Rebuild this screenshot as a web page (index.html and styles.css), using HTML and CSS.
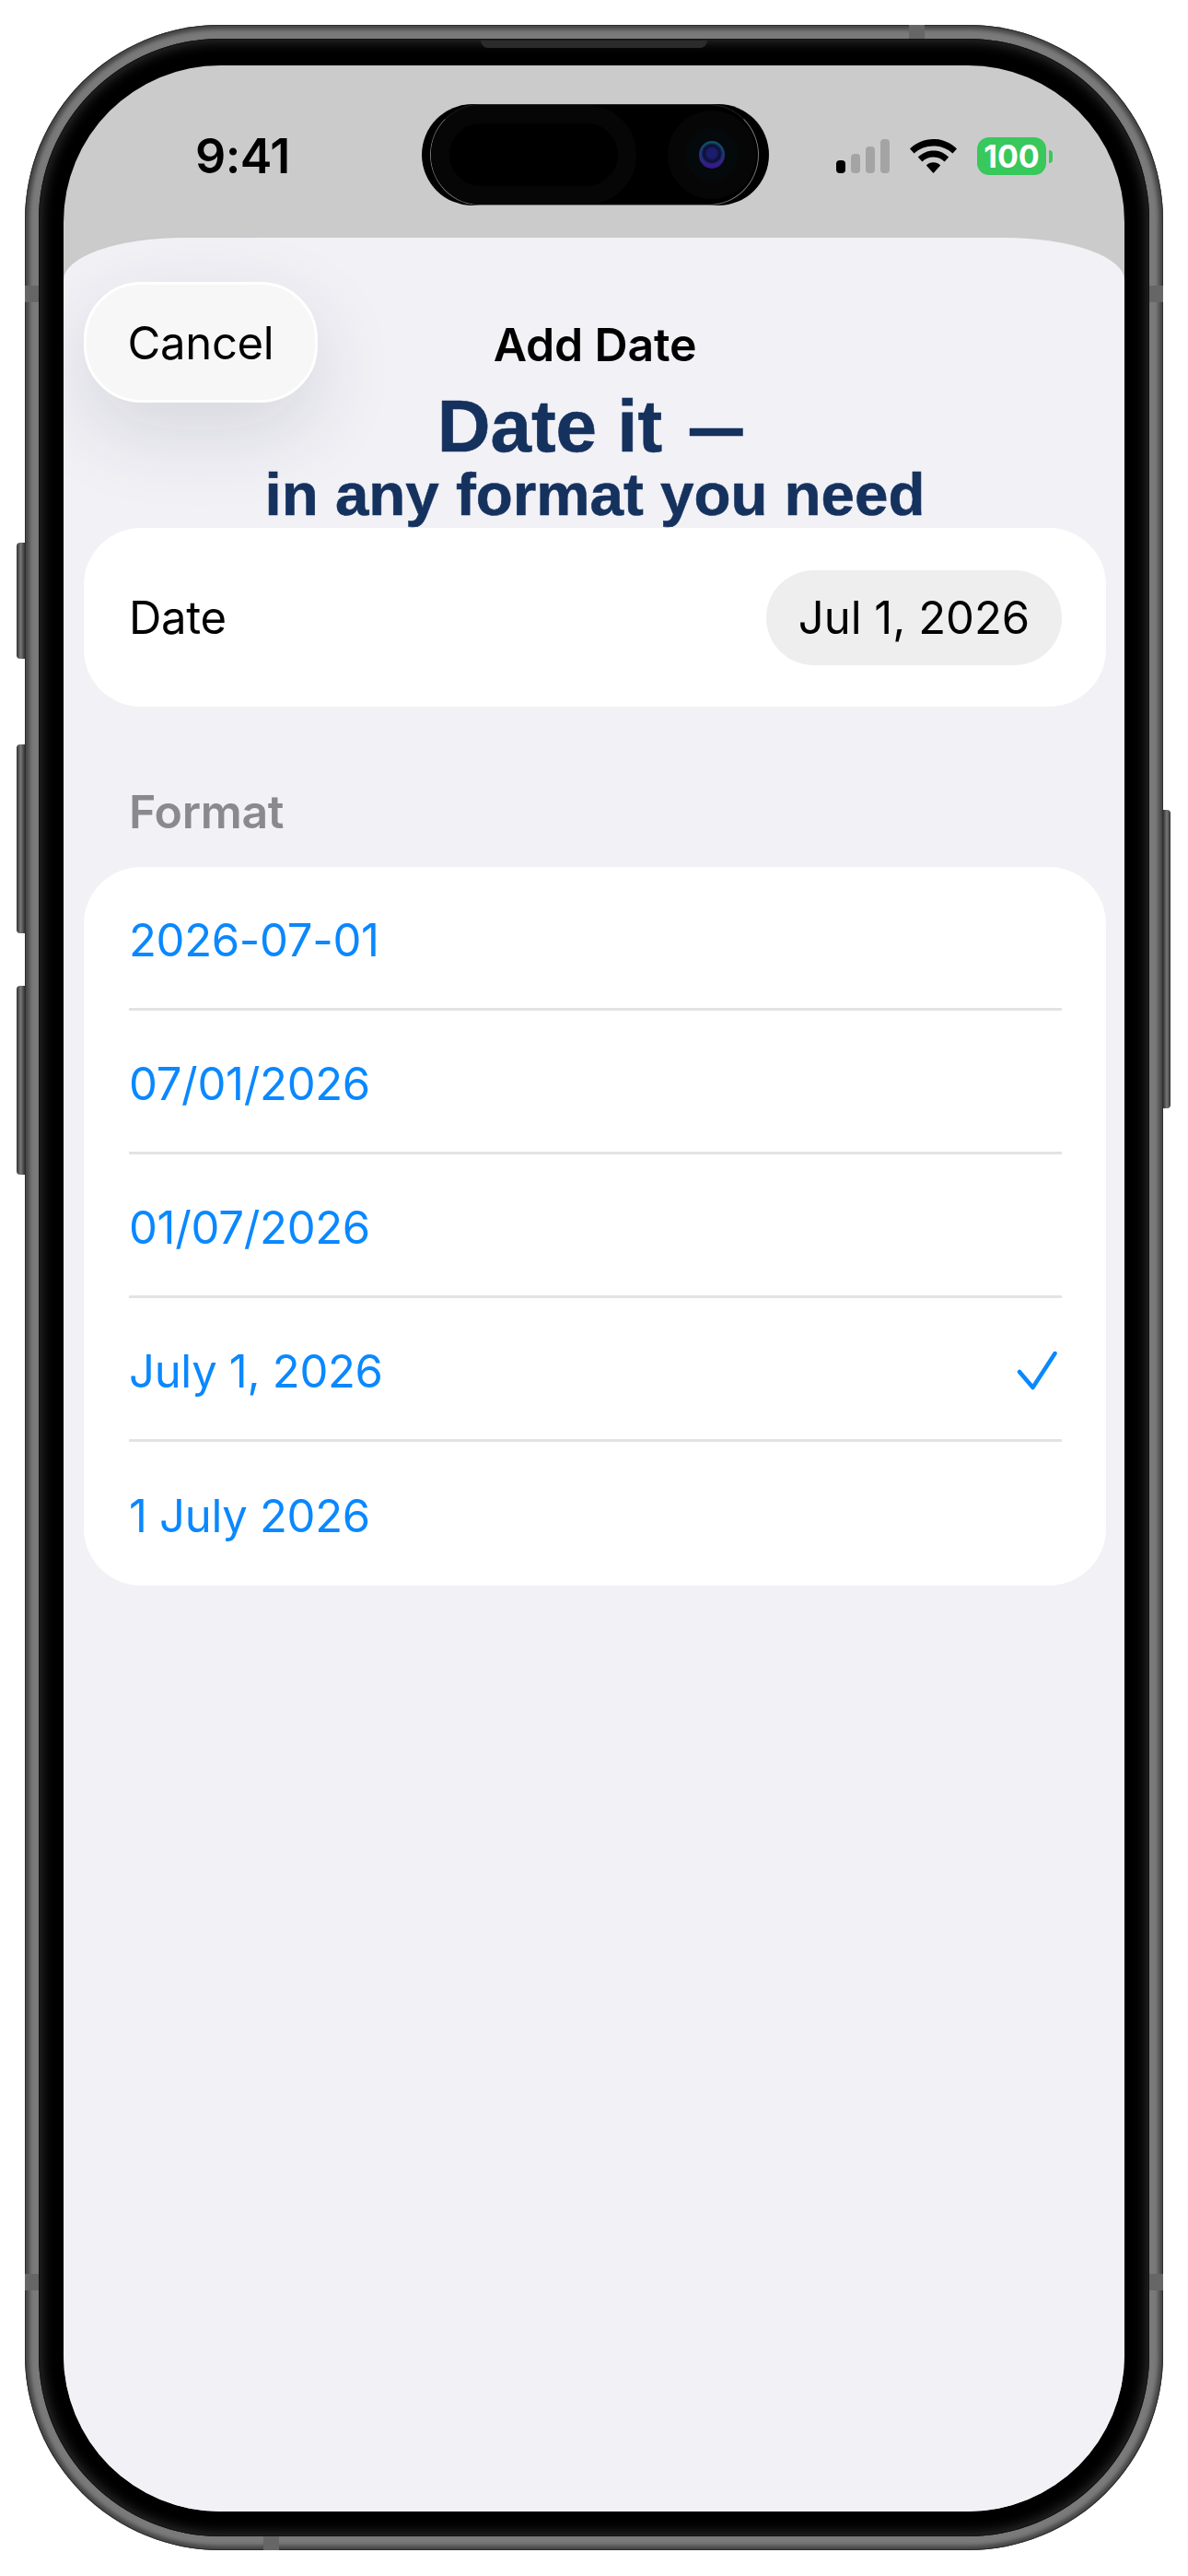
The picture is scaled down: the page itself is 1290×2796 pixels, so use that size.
FILE: index.html
```html
<!DOCTYPE html>
<html lang="en">
<head>
  <meta charset="UTF-8">
  <meta name="viewport" content="width=device-width, initial-scale=1.0">
  <title>Add Date</title>
  <link rel="stylesheet" href="styles.css">
</head>
<body>

<div class="device">
  <span class="side-btn mute"></span>
  <span class="side-btn vol-up"></span>
  <span class="side-btn vol-down"></span>
  <span class="side-btn power"></span>
  <span class="band band-top"></span>
  <span class="band band-bottom"></span>
  <span class="band band-left-top"></span>
  <span class="band band-right-top"></span>
  <span class="band band-left-bottom"></span>
  <span class="band band-right-bottom"></span>

  <div class="bezel">
    <span class="speaker"></span>
    <div class="screen">

      <div class="status-bar">
        <div class="time">9:41</div>
        <div class="island">
          <span class="island-line"></span>
          <span class="island-left"></span>
          <span class="camera"><span class="lens"></span></span>
        </div>
        <div class="status-icons">
          <div class="signal">
            <span class="bar bar-1 on"></span>
            <span class="bar bar-2"></span>
            <span class="bar bar-3"></span>
            <span class="bar bar-4"></span>
          </div>
          <svg class="wifi" width="51" height="37" viewBox="0 0 51 37">
            <path d="M0 10.5C7 3.8 16 0 25.5 0S44 3.8 51 10.5L46.400 15.400C40.600 10.300 33.400 7.400 25.500 7.400S10.400 10.300 4.600 15.400Z"/>
            <path d="M8.800 19.600C13.300 15.100 19.200 12.400 25.500 12.400S37.700 15.100 42.200 19.600L37.600 24.400C34.300 21.300 30.100 19.500 25.500 19.500S16.700 21.300 13.400 24.400Z"/>
            <path d="M17.800 28.400C19.900 26.400 22.600 25.200 25.500 25.200S31.100 26.400 33.200 28.400L25.500 37Z"/>
          </svg>
          <div class="battery">
            <div class="battery-body">100</div>
            <span class="battery-nub"></span>
          </div>
        </div>
      </div>

      <div class="sheet">
        <div class="nav">
          <button class="cancel-btn">Cancel</button>
          <div class="nav-title">Add Date</div>
        </div>

        <div class="caption">
          <div class="caption-big">Date it <span class="dash">—</span></div>
          <div class="caption-small">in any format you need</div>
        </div>

        <div class="card date-row">
          <span>Date</span>
          <span class="date-pill">Jul 1, 2026</span>
        </div>

        <div class="section-label">Format</div>

        <div class="card format-list">
          <div class="format-row">2026-07-01</div>
          <div class="format-row">07/01/2026</div>
          <div class="format-row">01/07/2026</div>
          <div class="format-row">
            <span>July 1, 2026</span>
            <svg class="check" width="44" height="44" viewBox="0 0 44 44">
              <path d="M3 23L17.500 40L41.500 3"/>
            </svg>
          </div>
          <div class="format-row">1 July 2026</div>
        </div>
      </div>

    </div>
  </div>
</div>

</body>
</html>
```

FILE: styles.css
```css
* {
  box-sizing: border-box;
}
body {
  margin: 0;
  width: 1290px;
  height: 2796px;
  padding: 27px;
  background-color: #fff;
  font-family: Inter, "Noto Sans", sans-serif;
  overflow: hidden;
}

/* phone frame */
.device {
  position: relative;
  width: 1236px;
  height: 2741px;
  padding: 15px;
  border-radius: 212px;
  background-color: #7a7a7a;
  box-shadow: inset 0 0 0 1px #2e2e2e, inset 0 0 4px 5px #464646;
}
.bezel {
  position: relative;
  height: 100%;
  padding: 29px 27px 27px;
  border-radius: 197px;
  background-color: #000;
  box-shadow: inset 0 0 0 1px #141414, inset 0 0 14px 3px #303030;
}
.speaker {
  position: absolute;
  top: 2px;
  left: 480px;
  width: 246px;
  height: 8px;
  border-radius: 0 0 8px 8px;
  background-color: #2b2b2b;
}
.side-btn {
  position: absolute;
  width: 9px;
  border-radius: 4px 0 0 4px;
  background: linear-gradient(90deg, #333, #777 50%, #333);
}
.mute { left: -9px; top: 562px; height: 126px; }
.vol-up { left: -9px; top: 781px; height: 205px; }
.vol-down { left: -9px; top: 1043px; height: 205px; }
.power {
  right: -8px;
  top: 852px;
  width: 8px;
  height: 324px;
  border-radius: 0 4px 4px 0;
  background: linear-gradient(270deg, #333, #777 50%, #333);
}
.band {
  position: absolute;
  background-color: #666;
}
.band-top { top: 0; left: 960px; width: 17px; height: 15px; }
.band-bottom { bottom: 0; left: 259px; width: 17px; height: 15px; }
.band-left-top { left: 0; top: 283px; width: 15px; height: 18px; }
.band-right-top { right: 0; top: 283px; width: 15px; height: 18px; }
.band-left-bottom { left: 0; top: 2441px; width: 15px; height: 18px; }
.band-right-bottom { right: 0; top: 2441px; width: 15px; height: 18px; }

.screen {
  height: 100%;
  overflow: hidden;
  border-radius: 170px;
  background-color: #cbcbcb;
}

/* status bar */
.status-bar {
  display: flex;
  align-items: flex-start;
  height: 187px;
  padding-top: 42px;
}
.time {
  width: 389px;
  padding: 23px 0 0 143px;
  font-size: 52px;
  line-height: 68px;
  font-weight: 600;
  letter-spacing: -0.5px;
  color: #000;
}
.island {
  position: relative;
  flex: none;
  width: 377px;
  height: 110px;
  border-radius: 55px;
  background-color: #000;
}
.island-line {
  position: absolute;
  top: 0;
  bottom: 0;
  left: 9px;
  right: 11px;
  border: 1px solid #777;
  border-top-color: #222;
  border-radius: 55px;
}
.island-left {
  position: absolute;
  top: 1px;
  left: 10px;
  width: 223px;
  height: 108px;
  border: 20px solid #060606;
  border-radius: 54px;
}
.camera {
  position: absolute;
  top: 7px;
  left: 267px;
  width: 96px;
  height: 96px;
  border-radius: 50%;
  background: radial-gradient(circle, #04090c 0 28px, #060606 29px);
}
.lens {
  position: absolute;
  top: 33px;
  left: 34px;
  width: 28px;
  height: 30px;
  border-radius: 50%;
  background:
    radial-gradient(circle at 50% 45%, #1c1c6e 0 5px, #0a0f30 9px, transparent 12px),
    linear-gradient(#0e5566, #3a148c);
}
.status-icons {
  display: flex;
  align-items: flex-start;
  padding: 37px 0 0 73px;
}
.signal {
  display: flex;
  align-items: flex-end;
  gap: 6px;
  height: 37px;
  margin-top: 1px;
}
.bar {
  width: 10px;
  border-radius: 4px;
  background-color: #a4a4a4;
}
.bar.on { background-color: #000; }
.bar-1 { height: 14px; }
.bar-2 { height: 21px; }
.bar-3 { height: 29px; }
.bar-4 { height: 37px; }
.wifi {
  margin: 1px 0 0 22px;
}
.battery {
  display: flex;
  align-items: center;
  margin: -1px 0 0 22px;
}
.battery-body {
  width: 75px;
  height: 41px;
  border-radius: 13px;
  background-color: #38c85c;
  color: #fff;
  font-size: 34px;
  font-weight: 700;
  line-height: 41px;
  text-align: center;
}
.battery-nub {
  width: 4px;
  height: 14px;
  margin-left: 3px;
  border-radius: 0 4px 4px 0;
  background-color: #38c85c;
}

/* sheet */
.sheet {
  height: 2468px;
  padding: 48px 20px 0 22px;
  border-radius: 130px 130px 0 0 / 46px 46px 0 0;
  background-color: #f1f1f6;
  font-size: 49px;
  letter-spacing: -0.3px;
  color: #000;
}
.nav {
  display: grid;
  grid-template-columns: 254px 1fr 254px;
  align-items: center;
}
.cancel-btn {
  height: 131px;
  padding: 2px 0 0;
  border: 3px solid #fff;
  border-radius: 62px;
  background-color: #f7f7f8;
  box-shadow: 0 30px 90px rgba(40, 40, 70, 0.14);
  font-family: inherit;
  font-size: 49px;
  letter-spacing: -0.3px;
  color: #000;
}
.nav-title {
  padding-top: 4px;
  text-align: center;
  font-weight: 600;
  font-size: 50px;
  letter-spacing: -0.2px;
}
.caption {
  height: 136px;
  margin-top: -14px;
  font-family: "Liberation Sans", Arial, sans-serif;
  font-weight: 700;
  letter-spacing: 0;
  text-align: center;
  color: #15315e;
  -webkit-text-stroke: 0.6px #15315e;
}
.caption-big {
  font-size: 80px;
  line-height: 80px;
}
.dash {
  display: inline-block;
  margin: 0 -12px 0 8px;
  transform: scaleX(0.72);
  transform-origin: left;
}
.caption-small {
  margin-top: 6px;
  font-size: 65.5px;
  line-height: 56px;
}
.card {
  border-radius: 62px;
  background-color: #fff;
}
.date-row {
  display: flex;
  align-items: center;
  justify-content: space-between;
  height: 194px;
  margin-top: 14px;
  padding: 0 48px 0 49px;
}
.date-pill {
  width: 321px;
  height: 103px;
  border-radius: 52px;
  background-color: #eeeeee;
  line-height: 103px;
  text-align: center;
  letter-spacing: 0;
}
.section-label {
  height: 174px;
  padding: 84px 0 0 49px;
  font-size: 50px;
  font-weight: 600;
  line-height: 60px;
  letter-spacing: -0.3px;
  color: #8a8a8e;
}
.format-list {
  padding: 0 48px 0 49px;
}
.format-row {
  display: flex;
  align-items: center;
  justify-content: space-between;
  height: 156px;
  padding-top: 5px;
  border-bottom: 3px solid #e3e3e5;
  color: #0a88ff;
}
.format-row:last-child {
  border-bottom: none;
}
.check {
  margin-right: 5px;
}
.check path {
  fill: none;
  stroke: #0a88ff;
  stroke-width: 4.5;
  stroke-linecap: round;
  stroke-linejoin: round;
}
```
